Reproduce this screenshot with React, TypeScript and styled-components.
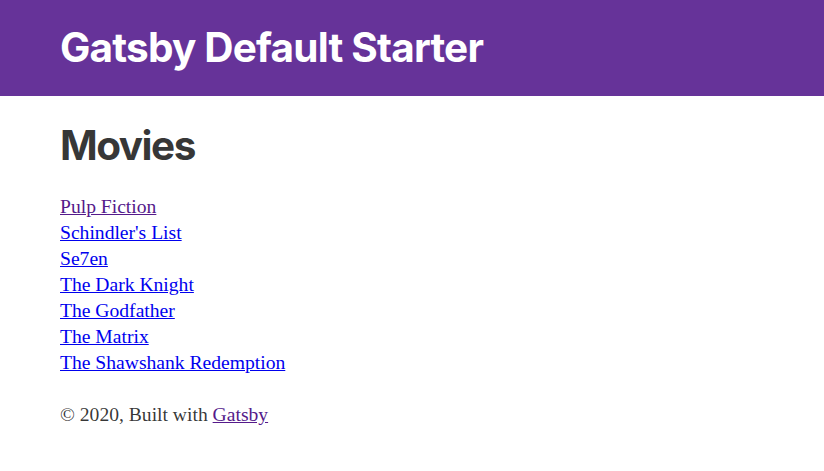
import React from 'react'
import styled, { createGlobalStyle } from 'styled-components'

const GlobalStyle = createGlobalStyle`
    html {
        font-size: 18px;
    }
    body {
        margin: 0;
        font-family: 'Liberation Serif', serif;
        color: hsla(0, 0%, 0%, 0.8);
        background: #fff;
    }
`

const Header = styled.header`
    background: rebeccapurple;
    margin-bottom: 28px;
`

const HeaderInner = styled.div`
    padding: 26px 60px;
`

const Title = styled.h1`
    margin: 0;
    font-family: Inter, 'Noto Sans', sans-serif;
    font-size: 2.25rem;
    line-height: 44px;
    font-weight: 700;
    letter-spacing: -0.8px;
    color: white;
`

const Main = styled.main`
    padding: 0 60px;
`

const Heading = styled.h1`
    margin: 0 0 25px;
    font-family: Inter, 'Noto Sans', sans-serif;
    font-size: 2.25rem;
    line-height: 1.1;
    font-weight: 700;
    letter-spacing: -1.5px;
    color: hsla(0, 0%, 0%, 0.8);
`

const MovieList = styled.ul`
    list-style: none;
    margin: 0 0 1.45rem;
    padding: 0;
    li {
        font-size: 19.6px;
        line-height: 26.1px;
    }
`

const MovieLink = styled.a<{ $visited?: boolean }>`
    color: ${p => (p.$visited ? '#551a8b' : '#0000ee')};
    text-decoration: underline;
`

const Footer = styled.footer`
    padding: 0 60px;
    font-size: 19.6px;
    line-height: 26.1px;
`

const movies = [
    'Pulp Fiction',
    "Schindler's List",
    'Se7en',
    'The Dark Knight',
    'The Godfather',
    'The Matrix',
    'The Shawshank Redemption',
]

const App: React.FunctionComponent = () => {
    return (
        <>
            <GlobalStyle />
            <Header>
                <HeaderInner>
                    <Title>Gatsby Default Starter</Title>
                </HeaderInner>
            </Header>
            <Main>
                <Heading>Movies</Heading>
                <MovieList>
                    {movies.map((m, i) => (
                        <li key={m}>
                            <MovieLink href='#' $visited={i === 0}>{m}</MovieLink>
                        </li>
                    ))}
                </MovieList>
            </Main>
            <Footer>
                © 2020, Built with <MovieLink href='#' $visited>Gatsby</MovieLink>
            </Footer>
        </>
    )
}

export default App
